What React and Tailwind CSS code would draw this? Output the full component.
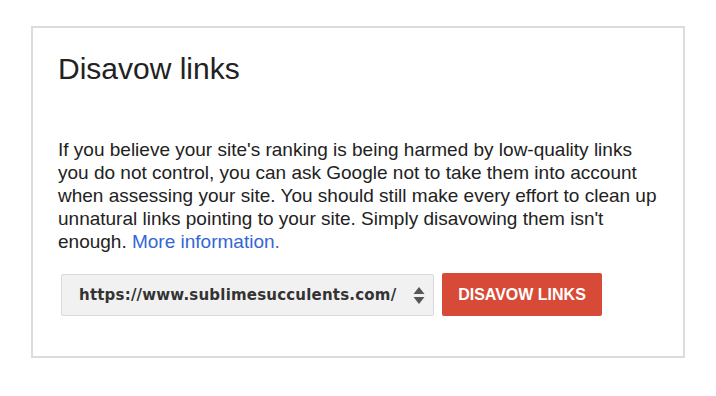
import React from "react";

export default function App() {
  return (
    <div className="w-[716px] h-[396px] bg-white pt-[26px] pl-[31px]" style={{ fontFamily: '"Liberation Sans", Arial, sans-serif' }}>
      <div className="w-[654px] h-[332px] border-2 border-[#dcdcdc] px-[25px] pt-[23px]">
        {/* TITLE */}
        <h1 className="text-[30px] leading-[36px] text-[#222]">Disavow links</h1>

        {/* DESCRIPTION */}
        <p className="mt-[51px] text-[19px] leading-[23px] text-[#222]">
          If you believe your site's ranking is being harmed by low-quality links you do not control, you can ask Google not to take them into account when assessing your site. You should still make every effort to clean up unnatural links pointing to your site. Simply disavowing them isn't enough.{" "}
          <a href="#" className="text-[#3367d6]">More information.</a>
        </p>

        {/* ACTIONS */}
        <div className="mt-[20px] flex items-start">
          <div className="ml-[3px] mt-[1px] w-[373px] h-[42px] bg-[#f1f1f1] border border-[#d9d9d9] rounded-[2px] flex items-center justify-between pl-[17px] pr-[8px]">
            <span className="text-[15px] font-bold text-[#333] tracking-[0.2px]" style={{ fontFamily: '"DejaVu Sans", Verdana, sans-serif' }}>
              https://www.sublimesucculents.com/
            </span>
            <svg width="12" height="17" viewBox="0 0 12 17" className="text-[#555]">
              <path d="M6 0 L11.5 7 L0.5 7 Z" fill="currentColor" />
              <path d="M0.5 10 L11.5 10 L6 17 Z" fill="currentColor" />
            </svg>
          </div>
          <button className="ml-[8px] w-[160px] h-[43px] bg-[#d84a38] rounded-[2px] text-white text-[16px] font-bold">
            DISAVOW LINKS
          </button>
        </div>
      </div>
    </div>
  );
}
